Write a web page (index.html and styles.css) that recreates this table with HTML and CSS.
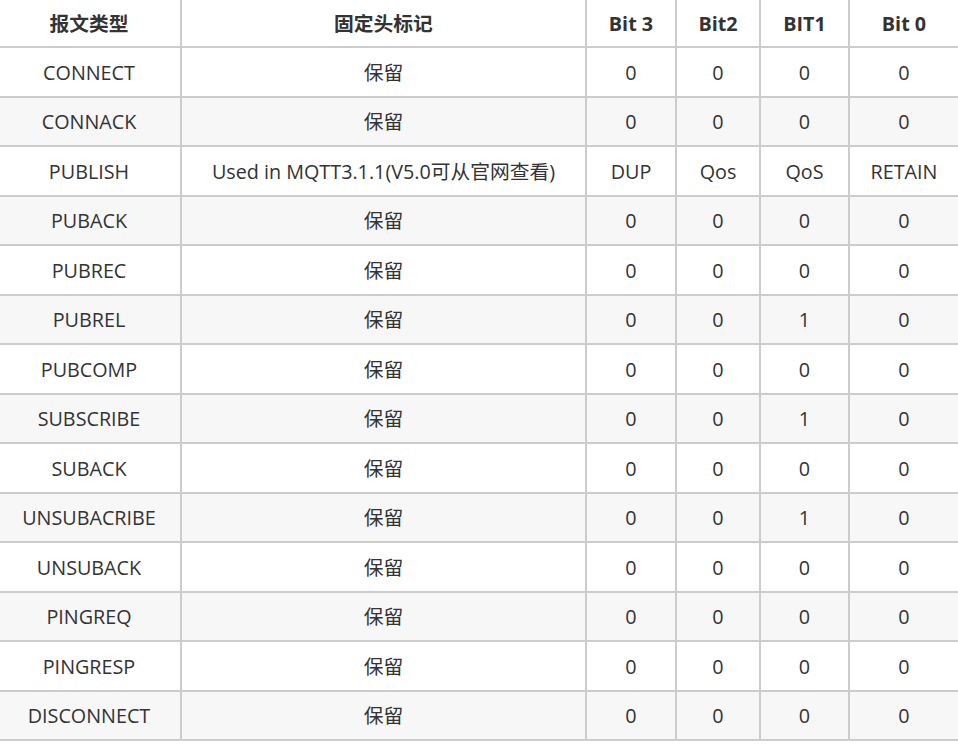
FILE: index.html
```html
<!DOCTYPE html>
<html lang="zh">
<head>
<meta charset="utf-8">
<title>MQTT 报文类型</title>
<link rel="stylesheet" href="styles.css">
</head>
<body>
<table class="grid">
  <colgroup>
    <col class="c1"><col class="c2"><col class="c3"><col class="c4"><col class="c5"><col class="c6">
  </colgroup>
  <thead>
    <tr><th>报文类型</th><th>固定头标记</th><th>Bit 3</th><th>Bit2</th><th>BIT1</th><th>Bit 0</th></tr>
  </thead>
  <tbody>
    <tr><td>CONNECT</td><td>保留</td><td>0</td><td>0</td><td>0</td><td>0</td></tr>
    <tr><td>CONNACK</td><td>保留</td><td>0</td><td>0</td><td>0</td><td>0</td></tr>
    <tr><td>PUBLISH</td><td>Used in MQTT3.1.1(V5.0可从官网查看)</td><td>DUP</td><td>Qos</td><td>QoS</td><td>RETAIN</td></tr>
    <tr><td>PUBACK</td><td>保留</td><td>0</td><td>0</td><td>0</td><td>0</td></tr>
    <tr><td>PUBREC</td><td>保留</td><td>0</td><td>0</td><td>0</td><td>0</td></tr>
    <tr><td>PUBREL</td><td>保留</td><td>0</td><td>0</td><td>1</td><td>0</td></tr>
    <tr><td>PUBCOMP</td><td>保留</td><td>0</td><td>0</td><td>0</td><td>0</td></tr>
    <tr><td>SUBSCRIBE</td><td>保留</td><td>0</td><td>0</td><td>1</td><td>0</td></tr>
    <tr><td>SUBACK</td><td>保留</td><td>0</td><td>0</td><td>0</td><td>0</td></tr>
    <tr><td>UNSUBACRIBE</td><td>保留</td><td>0</td><td>0</td><td>1</td><td>0</td></tr>
    <tr><td>UNSUBACK</td><td>保留</td><td>0</td><td>0</td><td>0</td><td>0</td></tr>
    <tr><td>PINGREQ</td><td>保留</td><td>0</td><td>0</td><td>0</td><td>0</td></tr>
    <tr><td>PINGRESP</td><td>保留</td><td>0</td><td>0</td><td>0</td><td>0</td></tr>
    <tr><td>DISCONNECT</td><td>保留</td><td>0</td><td>0</td><td>0</td><td>0</td></tr>
  </tbody>
</table>
</body>
</html>
```
FILE: styles.css
```css
html, body {
  margin: 0;
  padding: 0;
  background: #ffffff;
}
body {
  font-family: "Open Sans", "Noto Sans CJK SC", sans-serif;
  font-size: 19.75px;
  color: #333333;
  overflow: hidden;
}
.grid {
  border-collapse: separate;
  border-spacing: 0;
  table-layout: fixed;
  width: 960px;
  margin-left: -2px;
}
.c1 { width: 184px; }
.c2 { width: 405px; }
.c3 { width: 90px; }
.c4 { width: 84px; }
.c5 { width: 89px; }
.c6 { width: 108px; }
.grid th,
.grid td {
  padding: 0;
  text-align: center;
  vertical-align: middle;
  border-right: 2px solid #cccccc;
  border-bottom: 2px solid #cccccc;
  white-space: nowrap;
  line-height: 1.2;
}
.grid th:last-child,
.grid td:last-child {
  border-right: none;
}
.grid th {
  height: 44px;
  font-weight: 700;
  padding-top: 2px;
}
.grid td {
  height: 45.5px;
  padding-top: 2px;
}
.grid tbody tr:nth-child(even) td {
  background: #f7f7f7;
}
```
